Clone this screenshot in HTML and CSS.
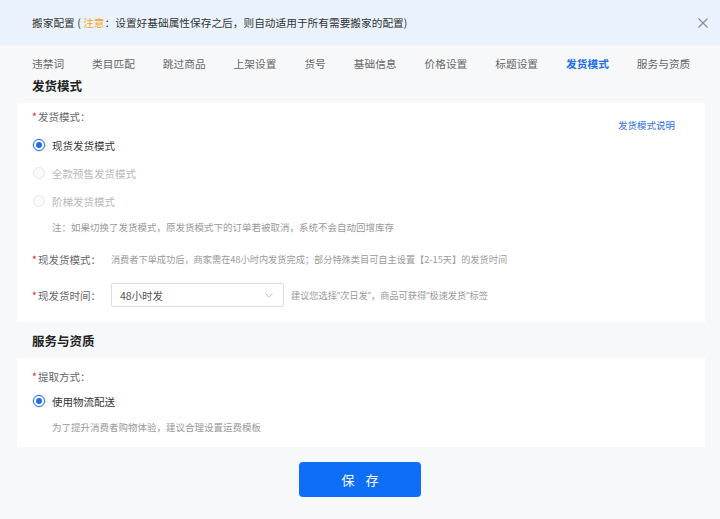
FILE: index.html
```html
<!DOCTYPE html>
<html lang="zh-CN">
<head>
<meta charset="utf-8">
<title>搬家配置</title>
<link rel="stylesheet" href="styles.css">
</head>
<body>
<div class="header">
  <div class="title">搬家配置 ( <span class="warn">注意</span>：设置好基础属性保存之后，则自动适用于所有需要搬家的配置)</div>
  <svg class="close" width="10" height="10" viewBox="0 0 10 10"><path d="M0.5 0.5 L9.5 9.5 M9.5 0.5 L0.5 9.5" stroke="#8a8a8a" stroke-width="1.1" fill="none"/></svg>
</div>
<div class="main">
  <div class="tabs">
    <span class="tab">违禁词</span>
    <span class="tab">类目匹配</span>
    <span class="tab">跳过商品</span>
    <span class="tab">上架设置</span>
    <span class="tab">货号</span>
    <span class="tab">基础信息</span>
    <span class="tab">价格设置</span>
    <span class="tab">标题设置</span>
    <span class="tab active">发货模式</span>
    <span class="tab">服务与资质</span>
  </div>
  <div class="sec-head first">发货模式</div>
  <div class="card card1">
    <div class="row-top">
      <span class="label"><i>*</i>发货模式：</span>
      <a class="link">发货模式说明</a>
    </div>
    <div class="radio-row"><span class="radio checked"></span><span class="rlabel">现货发货模式</span></div>
    <div class="radio-row"><span class="radio disabled"></span><span class="rlabel dis">全款预售发货模式</span></div>
    <div class="radio-row"><span class="radio disabled"></span><span class="rlabel dis">阶梯发货模式</span></div>
    <div class="note">注：如果切换了发货模式，原发货模式下的订单若被取消，系统不会自动回增库存</div>
    <div class="field f-mode"><span class="label"><i>*</i>现发货模式：</span><span class="desc">消费者下单成功后，商家需在48小时内发货完成；部分特殊类目可自主设置【2-15天】的发货时间</span></div>
    <div class="field f-time"><span class="label"><i>*</i>现发货时间：</span>
      <div class="select"><span>48小时发</span>
        <svg width="8" height="5" viewBox="0 0 8 5"><path d="M0.5 0.5 L4 4.2 L7.5 0.5" stroke="#c2c2c2" stroke-width="1" fill="none"/></svg>
      </div>
      <span class="desc">建议您选择<span class="q">“</span>次日发<span class="q">”</span>，商品可获得<span class="q">“</span>极速发货<span class="q">”</span>标签</span>
    </div>
  </div>
  <div class="sec-head second">服务与资质</div>
  <div class="card card2">
    <div class="row-top2"><span class="label"><i>*</i>提取方式：</span></div>
    <div class="radio-row r2"><span class="radio checked"></span><span class="rlabel">使用物流配送</span></div>
    <div class="note n2">为了提升消费者购物体验，建议合理设置运费模板</div>
  </div>
  <div class="footer"><button class="save">保 存</button></div>
</div>
</body>
</html>
```
FILE: styles.css
```css
* { box-sizing: border-box; }
html, body { margin: 0; padding: 0; }
body {
  width: 720px;
  height: 519px;
  overflow: hidden;
  font-family: "Noto Sans CJK SC", "Microsoft YaHei", sans-serif;
  background: #f7f8fa;
  color: #333;
}
.header {
  height: 45px;
  background: #eaf3fd;
  display: flex;
  align-items: center;
  justify-content: space-between;
  padding: 0 12px 0 32px;
}
.title { font-size: 10.7px; color: #333; line-height: 14px; padding-top: 1px; }
.warn { color: #f5a623; }
.close { display: block; }
.main { padding: 0 15px 0 17px; }
.tabs {
  display: flex;
  gap: 28px;
  padding: 13px 0 0 15px;
  font-size: 10.7px;
  line-height: 12px;
  color: #666;
  white-space: nowrap;
}
.tab.active { color: #1f6ee6; font-weight: 700; }
.sec-head {
  font-size: 12.5px;
  font-weight: 700;
  color: #222;
  padding-left: 15px;
}
.sec-head.first { padding-top: 7px; line-height: 18px; padding-bottom: 8px; }
.sec-head.second { line-height: 36px; padding-top: 1px; height: 36px; }
.card { background: #fff; padding: 0 15px; }
.card1 { padding-bottom: 10px; }
.label { font-size: 10.5px; color: #666; white-space: nowrap; }
.label i { font-style: normal; color: #f5222d; margin-right: 1px; }
.row-top {
  height: 28px;
  display: flex;
  justify-content: space-between;
  align-items: flex-start;
  line-height: 28px;
}
.link {
  font-size: 9.5px;
  color: #2f6fe0;
  line-height: 14px;
  margin-top: 15px;
  margin-right: 15px;
  cursor: pointer;
}
.radio-row {
  height: 28px;
  display: flex;
  align-items: center;
}
.radio {
  width: 12px;
  height: 12px;
  border-radius: 50%;
  margin-left: 1px;
  margin-right: 7px;
  position: relative;
  flex: none;
}
.radio.checked { border: 1px solid #1f6ee6; background: #fff; box-shadow: 0 0 0 1px rgba(31,110,230,0.12); }
.radio.checked::after {
  content: "";
  position: absolute;
  left: 2px; top: 2px;
  width: 6px; height: 6px;
  border-radius: 50%;
  background: #1f6ee6;
}
.radio.disabled { border: 1px solid #e6e6e6; background: #fafafa; }
.rlabel { font-size: 10.5px; color: #333; }
.rlabel.dis { color: #b8b8b8; }
.note {
  height: 25px;
  line-height: 25px;
  font-size: 9.5px;
  color: #999;
  padding-left: 20px;
}
.field { display: flex; align-items: center; }
.f-mode { height: 38px; }
.f-time { height: 34px; }
.desc { font-size: 9.2px; color: #9a9a9a; margin-left: 10px; white-space: nowrap; }
.desc .q { font-family: "Noto Sans", "Liberation Sans", sans-serif; }
.f-time .label { margin-right: 10px; }
.f-time .desc { margin-left: 7px; }
.select {
  width: 173px;
  height: 24px;
  border: 1px solid #dcdcdc;
  border-radius: 2px;
  display: flex;
  align-items: center;
  justify-content: space-between;
  padding: 0 10px 0 8px;
  font-size: 10.5px;
  color: #555;
}
.select svg { display: block; }
.row-top2 { height: 32px; line-height: 32px; }
.r2 { height: 22px; }
.n2 { height: 30px; line-height: 30px; }
.card2 { padding-bottom: 5px; }
.footer { display: flex; justify-content: center; padding-top: 15px; margin-left: -17px; margin-right: -15px; }
.save {
  width: 122px;
  height: 35px;
  border: none;
  border-radius: 4px;
  background: #0f6ef8;
  color: #fff;
  font-family: inherit;
  font-size: 13px;
  letter-spacing: 4px;
  text-indent: 4px;
  cursor: pointer;
}
```
